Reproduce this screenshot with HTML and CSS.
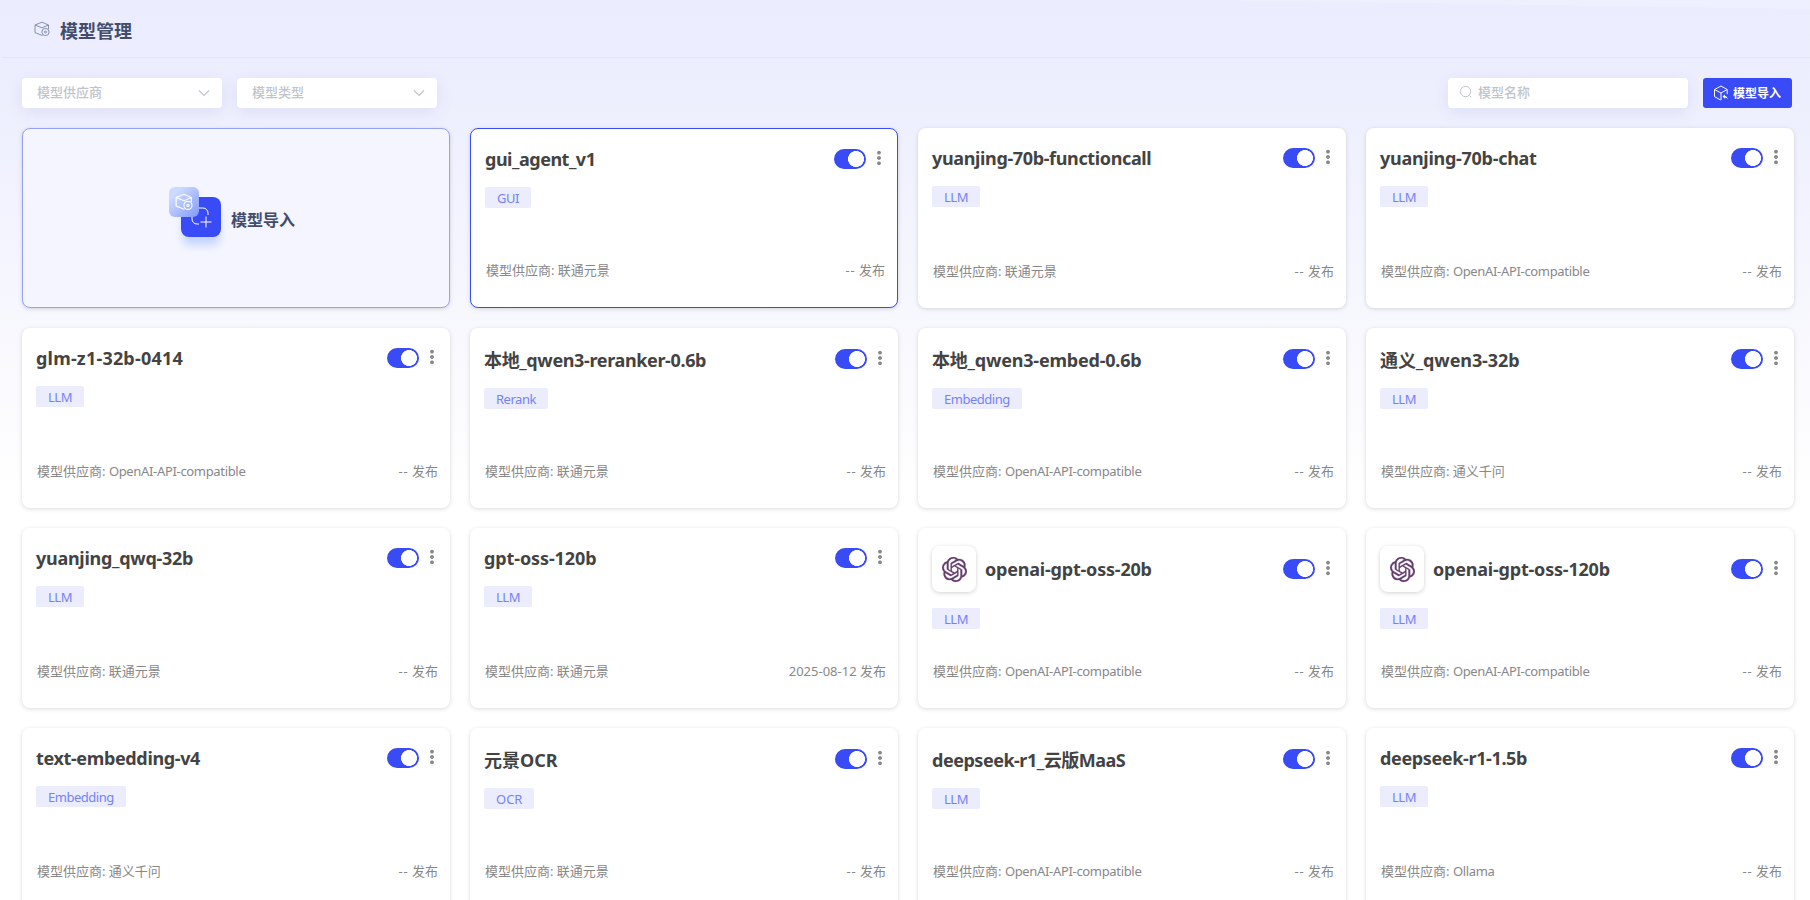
FILE: index.html
```html
<!DOCTYPE html>
<html lang="zh-CN">
<head>
<meta charset="utf-8">
<title>模型管理</title>
<link rel="stylesheet" href="styles.css">
</head>
<body>
<svg class="sprite" aria-hidden="true">
  <symbol id="box" viewBox="0 0 16 16"><path d="M8.500 14.500 7 14 1 11.600V4L8 1.200 14.500 4v4M1 4l7 2.800L14.500 4"/><circle cx="11.500" cy="11" r="3.600"/><circle cx="11.500" cy="11" r="1"/></symbol>
  <symbol id="cube" viewBox="0 0 16 16"><path d="M7.500 15 1.500 11.600V4.500L8 1l6.200 3.500V9M1.500 4.500 8 8l6.200-3.500M8 8v7"/><path d="M9.500 11.500 12 9.500v1.500c1.700.2 2.500 1.200 2.700 3.200-.8-1-1.600-1.400-2.700-1.400v1z" fill="currentColor" stroke="none"/></symbol>
  <symbol id="down" viewBox="0 0 12 8"><path d="m1 1.500 5 5 5-5"/></symbol>
  <symbol id="knot" viewBox="0 0 24 24"><path d="M22.282 9.821a5.985 5.985 0 0 0-.516-4.910 6.046 6.046 0 0 0-6.510-2.900A6.065 6.065 0 0 0 4.981 4.182a5.985 5.985 0 0 0-3.998 2.900 6.046 6.046 0 0 0 .743 7.097 5.980 5.980 0 0 0 .510 4.911 6.051 6.051 0 0 0 6.515 2.900A5.985 5.985 0 0 0 13.260 24a6.056 6.056 0 0 0 5.772-4.206 5.990 5.990 0 0 0 3.998-2.900 6.056 6.056 0 0 0-.748-7.073zM13.260 22.430a4.476 4.476 0 0 1-2.876-1.040l.141-.081 4.779-2.758a.795.795 0 0 0 .393-.681v-6.737l2.020 1.169a.071.071 0 0 1 .038.052v5.583a4.504 4.504 0 0 1-4.495 4.493zM3.600 18.304a4.470 4.470 0 0 1-.535-3.014l.142.085 4.783 2.759a.771.771 0 0 0 .781 0l5.843-3.369v2.332a.080.080 0 0 1-.033.062L9.740 19.950a4.500 4.500 0 0 1-6.140-1.646zM2.341 7.896a4.485 4.485 0 0 1 2.366-1.973V11.600a.766.766 0 0 0 .388.677l5.815 3.354-2.020 1.169a.076.076 0 0 1-.071 0l-4.830-2.787A4.504 4.504 0 0 1 2.341 7.872zm16.597 3.855-5.833-3.387L15.119 7.200a.076.076 0 0 1 .071 0l4.830 2.791a4.494 4.494 0 0 1-.676 8.105v-5.678a.790.790 0 0 0-.407-.667zm2.010-3.023-.141-.085-4.774-2.782a.776.776 0 0 0-.785 0L9.409 9.230V6.897a.066.066 0 0 1 .028-.061l4.830-2.787a4.500 4.500 0 0 1 6.680 4.660zM8.307 12.863l-2.020-1.164a.080.080 0 0 1-.038-.057V6.075a4.500 4.500 0 0 1 7.375-3.453l-.142.080L8.704 5.460a.795.795 0 0 0-.393.681zm1.097-2.365 2.602-1.500 2.607 1.500v2.999l-2.597 1.500-2.607-1.500z"/></symbol>
</svg>

<header class="head"><svg class="head-icon"><use href="#box"/></svg><h1>模型管理</h1></header>

<main>
  <div class="bar">
    <div class="select"><span>模型供应商</span><svg><use href="#down"/></svg></div>
    <div class="select"><span>模型类型</span><svg><use href="#down"/></svg></div>
    <div class="search"><svg viewBox="0 0 14 14"><circle cx="6.500" cy="6.500" r="5.200"/><path d="m10.500 10.500 1.700 1.700"/></svg><span>模型名称</span></div>
    <button class="import"><svg><use href="#cube"/></svg><span>模型导入</span></button>
  </div>

  <section class="grid">
    <div class="card add">
      <div class="add-art">
        <div class="add-back"><svg viewBox="0 0 40 40"><path d="M18 11h4a5 5 0 0 1 5 5v2M11 20v2a5 5 0 0 0 5 5h2M25 19.500v11M19.500 25h11"/></svg></div>
        <div class="add-front"><svg><use href="#box"/></svg></div>
      </div>
      <span>模型导入</span>
    </div>
    <article class="card active"><div class="top"><h2 class="tightest">gui_agent_v1</h2><i class="switch"></i><i class="dots"></i></div><span class="tag">GUI</span><footer><span>模型供应商: 联通元景</span><span><em>--</em> 发布</span></footer></article>
    <article class="card"><div class="top"><h2 class="tighter">yuanjing-70b-functioncall</h2><i class="switch"></i><i class="dots"></i></div><span class="tag">LLM</span><footer><span>模型供应商: 联通元景</span><span><em>--</em> 发布</span></footer></article>
    <article class="card"><div class="top"><h2 class="tight">yuanjing-70b-chat</h2><i class="switch"></i><i class="dots"></i></div><span class="tag">LLM</span><footer><span>模型供应商: <b>OpenAI-API-compatible</b></span><span><em>--</em> 发布</span></footer></article>

    <article class="card"><div class="top"><h2 class="wide">glm-z1-32b-0414</h2><i class="switch"></i><i class="dots"></i></div><span class="tag">LLM</span><footer><span>模型供应商: <b>OpenAI-API-compatible</b></span><span><em>--</em> 发布</span></footer></article>
    <article class="card"><div class="top tall"><h2 class="tighter">本地_qwen3-reranker-0.6b</h2><i class="switch"></i><i class="dots"></i></div><span class="tag">Rerank</span><footer><span>模型供应商: 联通元景</span><span><em>--</em> 发布</span></footer></article>
    <article class="card"><div class="top tall"><h2 class="snug">本地_qwen3-embed-0.6b</h2><i class="switch"></i><i class="dots"></i></div><span class="tag">Embedding</span><footer><span>模型供应商: <b>OpenAI-API-compatible</b></span><span><em>--</em> 发布</span></footer></article>
    <article class="card"><div class="top tall"><h2 class="even">通义_qwen3-32b</h2><i class="switch"></i><i class="dots"></i></div><span class="tag">LLM</span><footer><span>模型供应商: 通义千问</span><span><em>--</em> 发布</span></footer></article>

    <article class="card"><div class="top"><h2 class="tight">yuanjing_qwq-32b</h2><i class="switch"></i><i class="dots"></i></div><span class="tag">LLM</span><footer><span>模型供应商: 联通元景</span><span><em>--</em> 发布</span></footer></article>
    <article class="card"><div class="top"><h2 class="even">gpt-oss-120b</h2><i class="switch"></i><i class="dots"></i></div><span class="tag">LLM</span><footer><span>模型供应商: 联通元景</span><span>2025-08-12 发布</span></footer></article>
    <article class="card"><div class="top"><div class="logo"><svg><use href="#knot"/></svg></div><h2 class="snug">openai-gpt-oss-20b</h2><i class="switch"></i><i class="dots"></i></div><span class="tag">LLM</span><footer><span>模型供应商: <b>OpenAI-API-compatible</b></span><span><em>--</em> 发布</span></footer></article>
    <article class="card"><div class="top"><div class="logo"><svg><use href="#knot"/></svg></div><h2 class="snug">openai-gpt-oss-120b</h2><i class="switch"></i><i class="dots"></i></div><span class="tag">LLM</span><footer><span>模型供应商: <b>OpenAI-API-compatible</b></span><span><em>--</em> 发布</span></footer></article>

    <article class="card"><div class="top"><h2 class="tighter">text-embedding-v4</h2><i class="switch"></i><i class="dots"></i></div><span class="tag">Embedding</span><footer><span>模型供应商: 通义千问</span><span><em>--</em> 发布</span></footer></article>
    <article class="card"><div class="top tall"><h2>元景OCR</h2><i class="switch"></i><i class="dots"></i></div><span class="tag loose">OCR</span><footer><span>模型供应商: 联通元景</span><span><em>--</em> 发布</span></footer></article>
    <article class="card"><div class="top tall"><h2 class="tightest">deepseek-r1_云版MaaS</h2><i class="switch"></i><i class="dots"></i></div><span class="tag">LLM</span><footer><span>模型供应商: <b>OpenAI-API-compatible</b></span><span><em>--</em> 发布</span></footer></article>
    <article class="card"><div class="top"><h2 class="tighter">deepseek-r1-1.5b</h2><i class="switch"></i><i class="dots"></i></div><span class="tag">LLM</span><footer><span>模型供应商: <b>Ollama</b></span><span><em>--</em> 发布</span></footer></article>
  </section>
</main>
</body>
</html>
```

FILE: styles.css
```css
* { box-sizing: border-box; }
html { height: 100%; overflow: hidden; }
body {
  margin: 0;
  height: 900px;
  overflow: hidden;
  background:
    linear-gradient(to bottom left, #eff0fe 49%, transparent 51%) right top / 600px 9px no-repeat,
    linear-gradient(#ebecfd 0, #ecedfd 60px, #eff0fe 130px, #f7f7fe 310px, #fff 500px) #fff;
  font: 13px/20px "Noto Sans", "Noto Sans CJK SC", sans-serif;
  color: #888;
}
.sprite { position: absolute; width: 0; height: 0; }
svg { display: block; fill: none; stroke: currentColor; flex: none; }
h1, h2 { margin: 0; }

.head {
  display: flex;
  align-items: center;
  height: 58px;
  margin-left: 2px;
  padding: 4px 0 0 31px;
  border-bottom: 1px solid #e6e7ee;
}
.head-icon { width: 16px; height: 16px; color: #7c86a5; margin: 0 0 3px 1px; stroke-width: .9; }
.head h1 { margin: 1px 0 0 10px; font-size: 18px; color: #434c6c; font-weight: 700; }

.bar { display: flex; align-items: center; padding: 20px 18px 20px 22px; }
.select, .search {
  display: flex;
  align-items: center;
  height: 30px;
  border-radius: 4px;
  background: #fff;
  color: #c0c4cc;
  font-weight: 500;
  box-shadow: 0 4px 16px rgba(70, 80, 180, .1);
}
.select { width: 200px; margin-right: 15px; padding: 0 12px 2px 15px; justify-content: space-between; }
.select svg { width: 12px; height: 8px; margin-top: 2px; stroke-width: 1.2; }
.search { width: 240px; margin-left: auto; padding: 0 11px 2px; }
.search svg { width: 14px; height: 14px; margin-right: 5px; }
.import {
  display: flex;
  align-items: center;
  width: 89px;
  height: 30px;
  margin-left: 15px;
  padding: 0 10px;
  border: 0;
  border-radius: 3px;
  background: #384bf7;
  color: #fff;
  font: 700 12px/20px "Noto Sans CJK SC", sans-serif;
  white-space: nowrap;
}
.import svg { width: 16px; height: 16px; margin-right: 4px; }
.import span { margin-top: -1px; }

.grid {
  display: grid;
  grid-template-columns: repeat(4, 428px);
  grid-auto-rows: 180px;
  gap: 20px;
  padding-left: 22px;
}
.card {
  display: flex;
  flex-direction: column;
  align-items: flex-start;
  padding: 18px 12px 27px 14px;
  border-radius: 8px;
  background: #fff;
  box-shadow: 0 1px 4px rgba(0, 0, 0, .15);
}
.card.active { border: 1px solid #384bf7; }
.card.add {
  flex-direction: row;
  align-items: center;
  padding: 0 0 0 146px;
  border: 1px solid #96a2f8;
  background: #f4f5ff;
  color: #434c6c;
  font-size: 16px;
  font-weight: 700;
}
.card.add > span { margin-top: 4px; }
.add-art { position: relative; width: 52px; height: 62px; margin-right: 10px; }
.add-back {
  position: absolute;
  left: 12px;
  top: 10px;
  width: 40px;
  height: 40px;
  border-radius: 8px;
  background: #384bf7;
  color: #fff;
  box-shadow: 0 10px 8px -2px rgba(120, 160, 255, .4);
}
.add-front {
  position: absolute;
  left: 0;
  top: 0;
  width: 30px;
  height: 30px;
  padding: 6px;
  border-radius: 6px;
  background: linear-gradient(135deg, #cddafe 20%, #8199fb);
  color: #fff;
}
.add-front svg { width: 18px; height: 18px; }

.top { display: flex; align-items: center; width: 100%; height: 24px; }
.top.tall { height: 26px; }
.top:has(.logo) { height: 46px; }
.top h2 {
  flex: 1;
  font-size: 18px;
  line-height: 24px;
  font-weight: 700;
  color: #434343;
  white-space: nowrap;
}
.top.tall h2 { padding-top: 2px; }
h2.wide { letter-spacing: .2px; }
h2.even { letter-spacing: -.1px; }
h2.snug { letter-spacing: -.2px; }
h2.tight { letter-spacing: -.28px; }
h2.tighter { letter-spacing: -.36px; }
h2.tightest { letter-spacing: -.48px; }
.logo {
  display: flex;
  align-items: center;
  justify-content: center;
  width: 44px;
  height: 46px;
  margin-right: 9px;
  border-radius: 8px;
  background: #fff;
  box-shadow: 0 1px 4px rgba(0, 0, 0, .18);
}
.logo svg { width: 25px; height: 25px; fill: #633d6c; stroke: #633d6c; stroke-width: .3; }
.switch {
  width: 32px;
  height: 20px;
  border-radius: 10px;
  background: radial-gradient(circle at 22px 10px, #fff 7.700px, #384bf7 8.300px);
}
.dots {
  width: 4px;
  height: 16px;
  margin: 0 4px 2px 11px;
  background: radial-gradient(circle at center, #888 1.500px, transparent 2.200px) 0 0 / 4px 5.330px;
}
.tag {
  height: 21px;
  margin-top: 16px;
  padding: 1px 12px 0;
  border-radius: 2px;
  background: #ebedfd;
  color: #7582f9;
  line-height: 21px;
  letter-spacing: -.48px;
}
.tag.loose { letter-spacing: 0; }
.card footer {
  display: flex;
  justify-content: space-between;
  width: 100%;
  margin-top: auto;
  padding-left: 1px;
}
.card footer b { font-weight: 400; letter-spacing: -.33px; }
.card footer em { font-style: normal; letter-spacing: .9px; }
```
